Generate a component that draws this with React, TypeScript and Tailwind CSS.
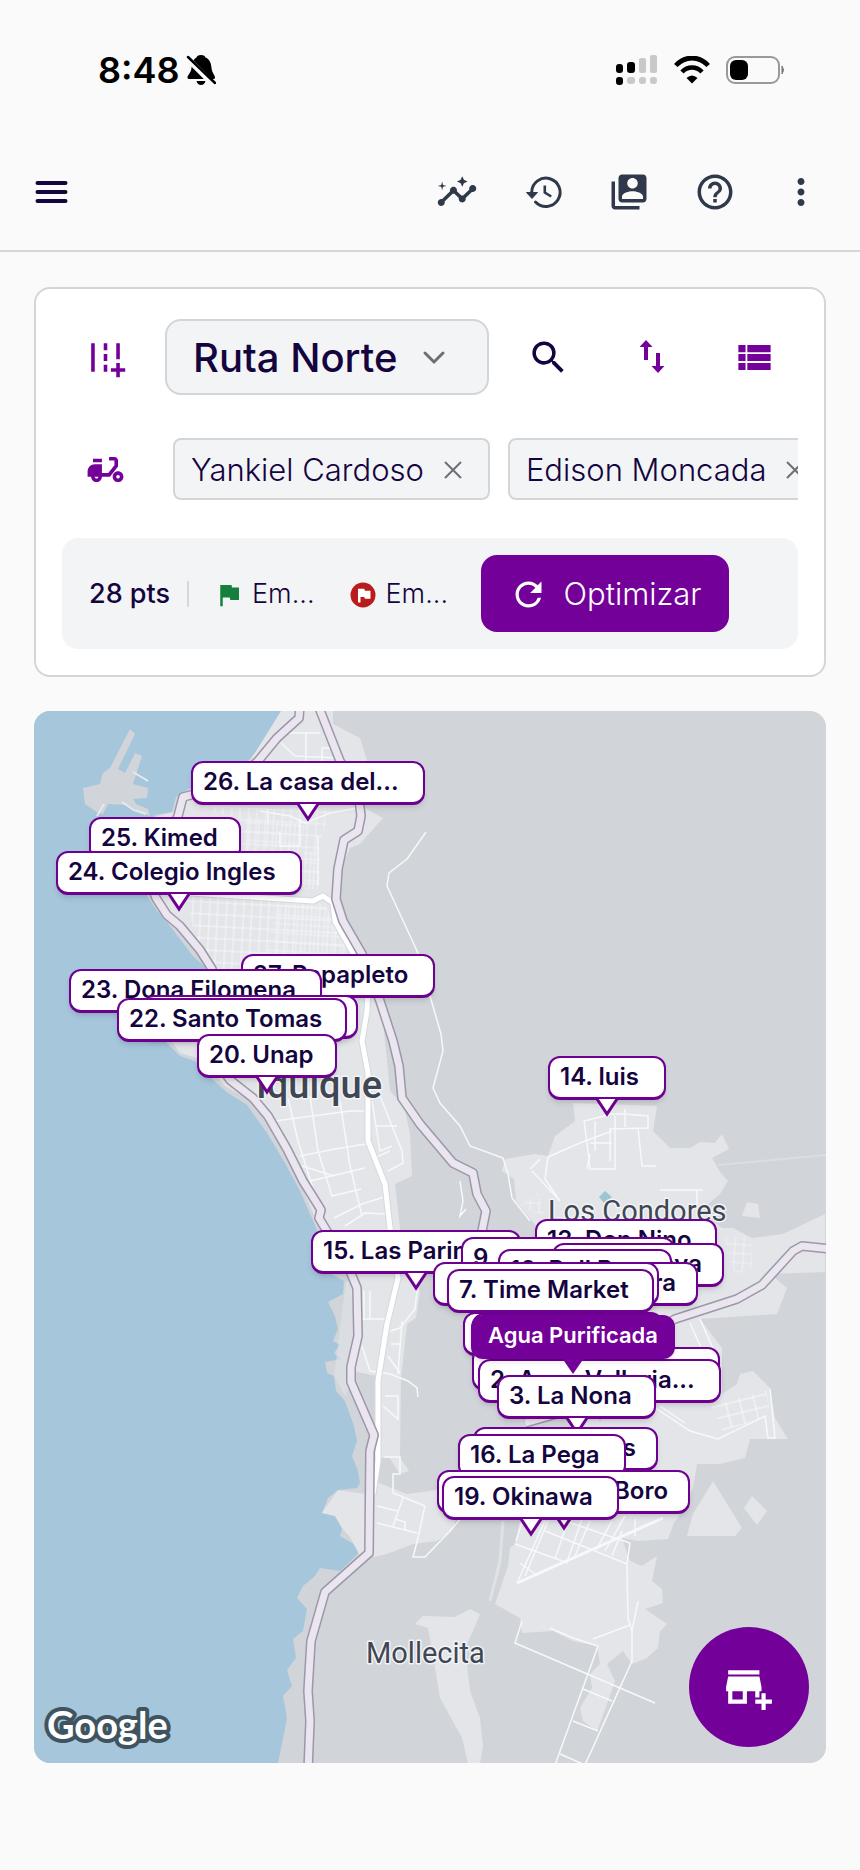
import { useState } from "react";
import {
  MdAddBusiness,
  MdAddRoad,
  MdDeliveryDining,
  MdFlag,
  MdHelpOutline,
  MdInsights,
  MdMoreVert,
  MdRefresh,
  MdSearch,
  MdSwitchAccount,
  MdViewList,
} from "react-icons/md";

type Stop = {
  label: string;
  x: number;
  y: number;
  w: number;
  end?: boolean;
  active?: boolean;
};

const MAP_W = 792;
const MAP_H = 1052;

// north to south, so the southern pins cover the northern ones
const stops: Stop[] = [
  { label: "26. La casa del...", x: 157, y: 50, w: 234 },
  { label: "25. Kimed", x: 55, y: 106, w: 152 },
  { label: "24. Colegio Ingles", x: 22, y: 140, w: 246 },
  { label: "27. Papapleto", x: 207, y: 243, w: 194 },
  { label: "23. Dona Filomena", x: 35, y: 258, w: 253 },
  { label: "", x: 108, y: 284, w: 216 },
  { label: "22. Santo Tomas", x: 83, y: 287, w: 230 },
  { label: "20. Unap", x: 163, y: 323, w: 140 },
  { label: "14. luis", x: 514, y: 345, w: 118 },
  { label: "15. Las Parinas", x: 277, y: 519, w: 210 },
  { label: "13. Don Nino", x: 501, y: 508, w: 182 },
  { label: "9.", x: 427, y: 526, w: 214 },
  { label: "12. Nueva", x: 518, y: 532, w: 172, end: true },
  { label: "10. Roll Burger", x: 464, y: 538, w: 174 },
  { label: "8. Sara", x: 530, y: 551, w: 134, end: true },
  { label: "", x: 399, y: 551, w: 226 },
  { label: "7. Time Market", x: 413, y: 558, w: 207 },
  { label: "", x: 429, y: 601, w: 200 },
  { label: "", x: 438, y: 602, w: 190 },
  { label: "", x: 438, y: 636, w: 248 },
  { label: "2. Agua Valloria...", x: 444, y: 648, w: 243 },
  { label: "Agua Purificada", x: 437, y: 604, w: 204, active: true },
  { label: "3. La Nona", x: 463, y: 664, w: 159 },
  { label: "17. Tres Islas", x: 439, y: 716, w: 185, end: true },
  { label: "16. La Pega", x: 424, y: 723, w: 168 },
  { label: "18. Boro", x: 403, y: 759, w: 253, end: true },
  { label: "19. Okinawa", x: 408, y: 765, w: 177 },
];

const drivers = ["Yankiel Cardoso", "Edison Moncada"];

const coastRoad =
  "M300 704 L299 717 L277 737 L258 760 L230 785 L195 793 L183 796 L178 815 L150 880 L156 897 L167 914 L180 925 L200 949 L212 968 L215 1000 L210 1050 L230 1079 L253 1097 L268 1115 L287 1148 L303 1180 L318 1204 L321 1209 L319 1217 L328 1232 L350 1270 L357 1287 L358 1335 L351 1366 L351 1381 L374 1434 L370 1450 L369 1552 L325 1591 L311 1640 L308 1690 L310 1720 L308 1770";
const inlandRoad =
  "M318 704 L340 760 L358 790 L361 815 L358 830 L344 839 L338 868 L336 898 L343 920 L362 953 L380 1000 L393 1040 L399 1065 L402 1097 L420 1123 L453 1162 L473 1172 L477 1193 L486 1210 L482 1230 L490 1300";
const eastRoad = "M832 1248 L802 1245 L793 1250 L762 1284 L737 1298 L675 1318 L600 1360 L560 1412 L525 1422";
const trunkRoad =
  "M190 892 L313 900 L323 895 L333 902 L335 920 L353 952 L368 985 L367 1010 L362 1040 L368 1072 L368 1140 L385 1183 L390 1227 L398 1277 L387 1323 L378 1380 L378 1460 L373 1493";

function BaseMap() {
  return (
    <svg
      className="absolute inset-0 h-full w-full"
      viewBox="34 710 792 1052"
      preserveAspectRatio="none"
      aria-hidden="true"
    >
      <defs>
        <pattern id="blocks" width="17" height="12" patternUnits="userSpaceOnUse" patternTransform="rotate(3)">
          <path d="M0 1H17M2 0V12M10 0V12" stroke="#f5f6f8" strokeWidth="1" fill="none" />
        </pattern>
        <pattern id="blocksTight" width="9" height="9" patternUnits="userSpaceOnUse" patternTransform="rotate(4)">
          <path d="M0 1H9M1 0V9" stroke="#f1f2f5" strokeWidth="1" fill="none" />
        </pattern>
        <pattern id="blocksTilted" width="14" height="12" patternUnits="userSpaceOnUse" patternTransform="rotate(-14)">
          <path d="M0 1H14M1 0V12" stroke="#f8f9fa" strokeWidth="1" fill="none" />
        </pattern>
      </defs>
      <rect x="34" y="710" width="792" height="1052" fill="#d1d5da" />

      {/* ocean */}
      <path
        fill="#a6c6dc"
        d="M34 710 H281 L268 735 L250 758 L215 782 L188 788 L176 796 L172 811 L155 814 L150 820 L140 860 L146 893 L157 910 L167 921 L180 938 L193 955 L206 967 L212 990 L190 1020 L165 1040 L180 1055 L200 1062 L212 1078 L228 1092 L247 1104 L267 1132 L285 1162 L300 1190 L311 1215 L320 1236 L330 1272 L344 1280 L343 1293 L328 1301 L335 1315 L338 1328 L333 1340 L340 1344 L334 1352 L341 1358 L325 1361 L327 1372 L334 1375 L336 1390 L345 1400 L354 1425 L357 1440 L352 1455 L358 1470 L360 1482 L357 1487 L338 1489 L328 1497 L322 1512 L335 1515 L342 1527 L340 1535 L357 1545 L358 1553 L340 1570 L320 1567 L315 1575 L303 1585 L297 1597 L307 1608 L303 1630 L293 1638 L296 1657 L287 1669 L292 1685 L283 1695 L287 1717 L282 1743 L278 1762 H34 Z"
      />
      <path
        fill="#d1d5da"
        d="M110 767 L130 728 L135 733 L118 768 L125 772 L135 752 L142 755 L133 783 L148 787 L147 797 L133 798 L136 803 L148 808 L150 815 L140 811 L128 804 L108 803 L103 813 L98 812 L85 803 L83 787 L100 783 L103 772 Z"
      />
      <path d="M133 771 L148 780 M97 815 L104 803 M122 801 L134 809 L146 813" stroke="#e6eaee" strokeWidth="2" fill="none" />

      {/* built-up areas */}
      <g fill="#e3e5e9">
        <path d="M281 710 H333 V723 L360 737 L367 760 L361 805 L383 817 L360 843 L350 847 L340 870 L337 900 L350 940 L375 985 L383 1020 L390 1090 L404 1105 L410 1133 L412 1175 L395 1183 L400 1227 L410 1270 L420 1290 L416 1317 L407 1323 L401 1377 L400 1457 L409 1470 L400 1473 L390 1457 H378 L377 1375 L357 1371 L351 1366 L356 1335 L350 1280 L325 1240 L308 1200 L290 1160 L268 1122 L248 1098 L225 1085 L200 1058 L180 1052 L170 1038 L195 1015 L214 990 L206 963 L180 932 L160 905 L148 880 L155 816 L177 810 L195 790 L250 760 Z" />
        <path d="M346 1280 L334 1375 L345 1395 L352 1380 L351 1366 L356 1335 L352 1280Z" opacity=".5" />
        <path d="M338 1489 L365 1493 V1551 L359 1553 L350 1536 L342 1527 L335 1515 L322 1512 Z" />
        <path d="M374 1480 L407 1493 L437 1489 L462 1500 L452 1530 L437 1540 L413 1543 L387 1553 L374 1556 Z" />
        <path d="M573 1102 L575 1120 L555 1135 L548 1155 L535 1153 L505 1158 L502 1170 L514 1178 L516 1200 L540 1230 L540 1330 L570 1420 L570 1540 L676 1520 L693 1487 L697 1463 L720 1463 L745 1457 L750 1438 H788 L775 1417 L770 1387 L753 1370 L740 1373 L737 1383 L722 1393 L722 1347 L700 1318 L777 1313 L787 1287 L770 1273 L825 1271 V1213 L783 1233 L752 1237 L733 1227 H722 L700 1210 L720 1193 L728 1180 L720 1171 L712 1157 L729 1148 L722 1133 L715 1142 L700 1141 L690 1147 L670 1147 L653 1130 L657 1105 Z" />
        <path d="M522 1510 L515 1543 L510 1547 L508 1565 L495 1603 L520 1617 L522 1632 L553 1630 L573 1640 L597 1645 L600 1663 L590 1673 L592 1687 L580 1707 L583 1720 L597 1730 L607 1703 L615 1680 L607 1663 L623 1650 L632 1663 L647 1657 L658 1647 L660 1630 L667 1623 L645 1608 L663 1602 L662 1588 L652 1580 L657 1555 L642 1565 L630 1560 L622 1537 L638 1540 L668 1538 L680 1505 Z" />
        <path d="M415 1623 L423 1615 L455 1616 L470 1608 L480 1613 L473 1630 L465 1647 L470 1690 L480 1717 L483 1745 L480 1762 H468 L462 1737 L440 1697 L434 1660 L428 1627 Z" />
        <path d="M713 1480 L742 1527 L735 1535 H687 L693 1513 Z" />
        <path d="M752 1495 L767 1510 L757 1524 L744 1507 Z" />
        <path d="M747 1201 L758 1203 L760 1217 L742 1215 Z" />
      </g>
      <path d="M605 1190 L612 1196 L604 1202 L599 1196 Z" fill="#9fc5d3" />

      {/* street grids */}
      <path d="M186 895 L325 903 L335 925 L350 955 L345 990 L225 975 L195 935 Z" fill="url(#blocks)" />
      <path d="M275 905 L325 903 L350 955 L345 990 L265 970 Z" fill="url(#blocksTight)" />
      <path d="M190 805 L330 810 L322 835 L318 888 H240 V818 Z" fill="url(#blocks)" opacity=".8" />
      <path d="M245 815 L305 825 L300 846 L245 848 Z" fill="url(#blocksTight)" />
      <path d="M304 850 H318 V888 H304 Z" fill="url(#blocksTight)" />
      <path d="M712 1405 L766 1389 L771 1415 L722 1430 Z" fill="url(#blocksTilted)" />
      <path d="M725 1236 H752 V1265 L735 1275 Z" fill="url(#blocksTight)" />
      <path d="M520 1205 L538 1192 L545 1215 Z" fill="url(#blocksTight)" />

      {/* local streets */}
      <g fill="none" stroke="#f7f8fa" strokeWidth="1.5">
        <path d="M281 742 L295 755 L340 757 M282 732 H320 M306 732 V762 M322 760 V747 H335" />
        <path d="M260 810 L290 815 L305 822 L330 812 L358 807 M318 835 V885 M268 808 V822 M280 830 V845 H300 V818" />
        <path d="M288 1097 L298 1140 L320 1210 M310 1095 L318 1150 L332 1195 L361 1188 M340 1100 L350 1165 L362 1215" />
        <path d="M275 1120 L350 1110 H366 M300 1155 L335 1148 L366 1143 M302 1165 L334 1175 M310 1180 L365 1167 M334 1217 L362 1203 L384 1196 M345 1225 L365 1212 L386 1213" />
        <path d="M378 1090 L390 1120 L402 1150 L403 1162 L388 1170 M372 1100 L380 1150 L392 1145 M376 1125 H397 M374 1157 L390 1150" />
        <path d="M364 1290 V1318 M370 1290 V1318 M362 1318 H387 M362 1345 L370 1370 L390 1373 L408 1380 L417 1387 L418 1396 M391 1343 H401 M388 1355 L400 1372 M390 1330 L400 1327 L415 1308 L417 1290 M385 1395 H398 V1418 L383 1405 M398 1373 L402 1320" />
        <path d="M377 1505 L398 1510 M377 1522 L417 1532 M403 1497 L393 1525 M384 1456 H400 V1473 H393 V1492 L425 1505 L418 1537 L413 1556 H425 L450 1530 L480 1495 M395 1518 L405 1521 V1530" />
        <path d="M426 831 L407 858 L389 872 L387 885 L417 950 L430 995 L441 1033 L443 1050 L433 1087 L440 1102 L460 1125 L470 1145 L503 1157 L508 1173 L512 1197 L530 1220" />
        <path d="M460 1180 L463 1200 L460 1215 L466 1208" />
        <path d="M584 1120 L612 1113 H625 L648 1115 V1127 L610 1128 V1160 M584 1120 L588 1150 L590 1168 H615 V1115 M595 1120 V1150 M590 1142 H612 M625 1108 V1126 M638 1127 L642 1165 H656 M548 1156 L580 1142 L612 1130 M548 1156 L545 1178 L560 1200 M590 1153 L587 1168 M530 1168 L540 1158 M532 1170 L560 1200 M660 1189 H703 M697 1190 V1205" />
        <path d="M718 1164 L826 1154" stroke="#dbdee3" strokeWidth="2" />
        <path d="M690 1322 L705 1356 M700 1318 L715 1352 M645 1400 L690 1430 L718 1438 L765 1415 L768 1437 H775 L770 1388 M660 1405 L685 1422" />
        <path d="M522 1620 L515 1642 L655 1702 M598 1645 L555 1764 M550 1627 L573 1637 L598 1645 M593 1638 L630 1624 M630 1542 L627 1563 L628 1617 L632 1630 V1660 L585 1764 M638 1600 L632 1630 M583 1688 L612 1700 M573 1720 L598 1730 M560 1753 L585 1764" />
        <path d="M517 1582 L663 1517" strokeWidth="3" />
        <path d="M517 1582 L545 1520 M525 1575 L548 1520 M515 1543 L568 1562 M545 1530 L590 1548 L627 1563 M550 1515 L630 1542 M555 1558 L568 1520 M568 1558 L582 1518 M575 1555 L590 1520 M605 1550 L625 1515 M612 1555 L622 1530 M520 1562 L538 1575 M516 1540 L524 1515 M596 1549 L612 1520 M635 1518 V1535" />
        <path d="M503 1520 L500 1560 L490 1600" stroke="#dfe2e6" strokeWidth="3" />
      </g>

      {/* highways */}
      <g fill="none" strokeLinejoin="round">
        <path d={trunkRoad} stroke="#d5d8dd" strokeWidth="7" />
        <path d={trunkRoad} stroke="#fff" strokeWidth="5" />
        <path d={coastRoad} stroke="#9b98a8" strokeWidth="10" />
        <path d={inlandRoad} stroke="#9b98a8" strokeWidth="10" />
        <path d={eastRoad} stroke="#9b98a8" strokeWidth="10" />
        <path d={coastRoad} stroke="#ebe5f0" strokeWidth="7" />
        <path d={inlandRoad} stroke="#ebe5f0" strokeWidth="7" />
        <path d={eastRoad} stroke="#ebe5f0" strokeWidth="7" />
      </g>

      {/* place names */}
      <g
        fill="#3f4754"
        stroke="#f3f4f6"
        strokeWidth="3"
        strokeLinejoin="round"
        paintOrder="stroke"
        fontFamily="Roboto, sans-serif"
      >
        <text x="256" y="1097" fontSize="38" fontWeight="500">Iquique</text>
        <text x="548" y="1220" fontSize="29">Los Condores</text>
        <text x="366" y="1662" fontSize="29">Mollecita</text>
        <text
          x="47"
          y="1738"
          fontSize="38"
          fontWeight="700"
          fontFamily="Lato, sans-serif"
          fill="#fff"
          stroke="#40545f"
          strokeWidth="8"
        >
          Google
        </text>
      </g>
    </svg>
  );
}

function Marker({ stop }: { stop: Stop }) {
  return (
    <button
      type="button"
      className={`absolute flex h-11 items-center rounded-xl leading-none font-semibold whitespace-nowrap shadow-md ${
        stop.active
          ? "justify-center bg-[#730099] pb-1 text-[22px] text-white"
          : "border-2 border-b-3 border-[#6d0091] bg-white pr-5 pb-0.5 pl-2.5 text-[24px] text-[#15053f]"
      } ${stop.end ? "justify-end" : ""}`}
      style={{
        left: `${(stop.x / MAP_W) * 100}%`,
        top: `${(stop.y / MAP_H) * 100}%`,
        width: stop.w,
      }}
    >
      {stop.label}
      <svg
        className={`absolute left-1/2 h-5 w-6 -translate-x-1/2 ${stop.active ? "top-[43px]" : "top-[41px]"}`}
        viewBox="0 0 24 20"
        fill={stop.active ? "#730099" : "#fff"}
        aria-hidden="true"
      >
        <path
          d={stop.active ? "M1 0 L12 16 L23 0" : "M2 0 L12 15 L22 0"}
          stroke={stop.active ? "none" : "#6d0091"}
          strokeWidth="3"
        />
      </svg>
    </button>
  );
}

function StatusBar() {
  return (
    <div className="flex h-[134px] items-center justify-between pt-[50px] pr-[74px] pb-[44px] pl-[98px] text-black">
      <div className="flex items-center gap-1.5">
        <span className="text-[36px] leading-10 font-semibold">8:48</span>
        <svg className="h-8 w-[30px]" viewBox="0 0 30 32" aria-label="Silencio">
          <path d="M15 1 C18 1 19 2 19.500 3.500 C24 5.500 25 9 25.500 14 C26 19 29 21 29 23.500 Q29 25 27.500 25 H3 Q1.500 25 1.500 23.500 C1.500 21 5 19 5.500 14 C6 9 7 5.500 10.500 3.500 C11 2 12 1 15 1 Z" />
          <path d="M10.500 27 H19.500 Q18.500 31 15 31 Q11.500 31 10.500 27 Z" />
          <path d="M0 3 L28 31" stroke="#fafafa" strokeWidth="6" />
          <path d="M2 3 L29 29" stroke="#000" strokeWidth="2.500" strokeLinecap="round" />
        </svg>
      </div>
      <div className="flex items-center gap-4">
        <svg className="h-8 w-[42px]" viewBox="0 0 42 32" aria-label="Señal">
          <g fill="#000">
            <rect x="0" y="10" width="7" height="9" rx="3" />
            <rect x="11" y="8" width="8" height="11" rx="3" />
            <rect x="0" y="23" width="7" height="8" rx="3" />
          </g>
          <g fill="#c9c9c9">
            <rect x="23" y="4" width="7" height="15" rx="2" />
            <rect x="34" y="1" width="7" height="18" rx="2" />
            <rect x="11" y="23" width="8" height="7" rx="3" />
            <rect x="23" y="23" width="7" height="7" rx="3" />
            <rect x="34" y="23" width="7" height="7" rx="3" />
          </g>
        </svg>
        <svg className="h-7 w-9" viewBox="0 0 36 28" fill="none" aria-label="Wifi">
          <path d="M1.800 9.500 C11 -0.500 25 -0.500 34.200 9.500" stroke="#000" strokeWidth="4.800" />
          <path d="M8 16 C13.500 10 22.500 10 28 16" stroke="#000" strokeWidth="4.600" />
          <path d="M12.500 22 Q18 17 23.500 22 L18 27.500 Z" fill="#000" />
        </svg>
        <svg className="h-7 w-[60px]" viewBox="0 0 60 28" aria-label="Batería">
          <rect x="1" y="1" width="52" height="26" rx="8" fill="none" stroke="#999" strokeWidth="2" />
          <rect x="4" y="4" width="18" height="20" rx="6" />
          <path d="M56 10 Q59 14 56 18 Z" fill="#777" stroke="#777" />
        </svg>
      </div>
    </div>
  );
}

function HistoryIcon() {
  return (
    <svg className="h-[42px] w-[42px]" viewBox="0 0 42 42" fill="none" stroke="currentColor" aria-hidden="true">
      <path d="M9.700 21 A14.200 14.200 0 1 1 13.500 31" strokeWidth="3" strokeLinecap="round" />
      <path d="M4.500 21.500 H15.500 L10 27.500 Z" fill="currentColor" strokeWidth="1" strokeLinejoin="round" />
      <path d="M22.800 14.500 V21.500 L29.200 25.500" strokeWidth="2.600" />
    </svg>
  );
}

const toolButton = "flex h-16 w-[86px] items-center justify-center text-[42px]";
const cardButton = "flex h-[76px] w-[87px] shrink-0 items-center justify-center text-[43px] text-[#730099]";

export default function App() {
  const [route, setRoute] = useState("Ruta Norte");

  return (
    <div className="flex min-h-screen flex-col bg-[#fafafa] font-['Inter',sans-serif] text-[#15053f]">
      <header className="border-b-2 border-[#d6d6d8]">
        <StatusBar />
        <nav className="flex h-[116px] items-center justify-between pr-4 pl-[34px] text-[#2f394b]">
          <button type="button" aria-label="Menú" className="text-[#15053f]">
            <svg className="h-9 w-9" viewBox="0 0 36 36" stroke="currentColor" strokeWidth="4" strokeLinecap="round">
              <path d="M3.500 9H31.500M3.500 18H31.500M3.500 27H31.500" />
            </svg>
          </button>
          <div className="flex">
            <button type="button" aria-label="Estadísticas" className={toolButton}>
              <MdInsights />
            </button>
            <button type="button" aria-label="Historial" className={toolButton}>
              <HistoryIcon />
            </button>
            <button type="button" aria-label="Contactos" className={toolButton}>
              <MdSwitchAccount />
            </button>
            <button type="button" aria-label="Ayuda" className={toolButton}>
              <MdHelpOutline />
            </button>
            <button type="button" aria-label="Más" className={toolButton}>
              <MdMoreVert />
            </button>
          </div>
        </nav>
      </header>

      <main className="flex flex-1 flex-col gap-[34px] px-[34px] pt-[35px] pb-[107px]">
        <section className="rounded-2xl border-2 border-[#d3d5d9] bg-white px-[26px] pt-[30px] pb-[26px]">
          <div className="flex gap-4">
            <button type="button" aria-label="Nueva ruta" className={cardButton}>
              <MdAddRoad />
            </button>
            <div className="relative min-w-0 flex-1">
              <select
                aria-label="Ruta"
                value={route}
                onChange={(e) => setRoute(e.target.value)}
                className="h-[76px] w-full appearance-none rounded-2xl border-2 border-[#d3d5d9] bg-[#f3f4f6] pt-0.5 pl-[26px] text-[40px] font-medium"
              >
                <option>Ruta Norte</option>
                <option>Ruta Sur</option>
              </select>
              <svg
                className="pointer-events-none absolute top-[31px] right-[43px] h-4 w-6"
                viewBox="0 0 24 16"
                fill="none"
                stroke="#6b7077"
                strokeWidth="3"
                aria-hidden="true"
              >
                <path d="M3 3 L12 12 L21 3" strokeLinecap="round" />
              </svg>
            </div>
            <button type="button" aria-label="Buscar" className={cardButton}>
              <MdSearch className="text-[#15053f]" />
            </button>
            <button type="button" aria-label="Invertir orden" className={cardButton}>
              <svg className="h-9 w-6" viewBox="0 0 24 36" fill="currentColor" aria-hidden="true">
                <path d="M6 1 L12.500 8 H8 V21 H4 V8 H-.5 Z" />
                <path d="M18 34 L24.500 27 H20 V14 H16 V27 H11.500 Z" />
              </svg>
            </button>
            <button type="button" aria-label="Ver lista" className={cardButton}>
              <MdViewList />
            </button>
          </div>

          <div className="mt-[43px] flex h-[62px] items-center gap-6">
            <button type="button" aria-label="Repartidores" className={cardButton}>
              <MdDeliveryDining />
            </button>
            <div className="flex min-w-0 flex-1 gap-[18px] overflow-hidden">
              {drivers.map((name) => (
                <div
                  key={name}
                  className="flex h-[62px] shrink-0 items-center gap-5 rounded-lg border-2 border-[#d3d5d9] bg-[#f3f4f6] pt-0.5 pr-[26px] pl-4"
                >
                  <span className="text-[31px] leading-10 font-light whitespace-nowrap">{name}</span>
                  <button type="button" aria-label={`Quitar a ${name}`}>
                    <svg className="h-[18px] w-[18px]" viewBox="0 0 18 18" stroke="#6b7077" strokeWidth="2">
                      <path d="M1 1 L17 17 M17 1 L1 17" />
                    </svg>
                  </button>
                </div>
              ))}
            </div>
          </div>

          <div className="mt-[38px] flex h-[111px] items-center rounded-2xl bg-[#f3f4f6] pl-[27px]">
            <span className="pt-0.5 text-[27px] font-medium">28 pts</span>
            <span className="ml-[17px] h-[26px] w-0.5 bg-[#d6d8dc]" />
            <span className="ml-[25px] flex items-center gap-2 pt-0.5 text-[27px] font-light">
              <MdFlag className="text-[30px] text-[#15803d]" />
              Em...
            </span>
            <span className="ml-[33px] flex items-center gap-2 pt-0.5 text-[27px] font-light">
              <svg className="h-[30px] w-[30px]" viewBox="0 0 24 24" aria-hidden="true">
                <circle cx="12" cy="12" r="10" fill="#b91c1c" />
                <path d="M8 7 H13 L13.500 8.500 H18 V15 H13.500 L13 13.500 H10 V18 H8 Z" fill="#fff" />
              </svg>
              Em...
            </span>
            <button
              type="button"
              className="ml-[33px] flex h-[77px] w-[248px] items-center justify-center gap-4 rounded-2xl bg-[#730099] pt-0.5 text-[31px] font-light text-white"
            >
              <MdRefresh className="text-[39px]" />
              Optimizar
            </button>
          </div>
        </section>

        <section aria-label="Mapa" className="relative min-h-[600px] flex-1 overflow-hidden rounded-2xl">
          <BaseMap />
          {stops.map((stop) => (
            <Marker key={`${stop.x}-${stop.y}`} stop={stop} />
          ))}
          <button
            type="button"
            aria-label="Agregar punto"
            className="absolute right-[17px] bottom-4 flex h-[120px] w-[120px] items-center justify-center rounded-full bg-[#730099] text-[50px] text-white"
          >
            <MdAddBusiness />
          </button>
        </section>
      </main>
    </div>
  );
}
